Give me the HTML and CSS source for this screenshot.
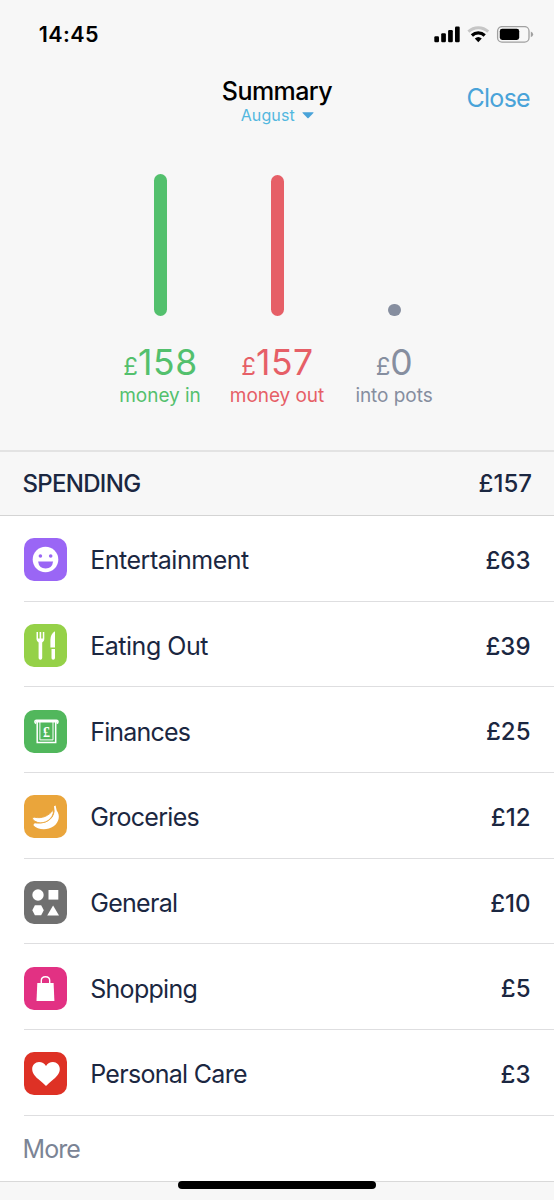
FILE: index.html
```html
<!DOCTYPE html>
<html lang="en">
<head>
<meta charset="utf-8">
<title>Summary</title>
<link rel="stylesheet" href="styles.css">
</head>
<body>
<div class="screen">
  <div class="status">
    <span class="time">14:45</span>
    <svg class="status-icons" viewBox="0 0 100 18" width="100" height="18">
      <rect x="0.3" y="10.3" width="4.7" height="5.9" rx="1.2"/>
      <rect x="7.2" y="7.2" width="4.7" height="9" rx="1.2"/>
      <rect x="14.1" y="4" width="4.7" height="12.2" rx="1.2"/>
      <rect x="21" y="0.5" width="4.7" height="15.7" rx="1.2"/>
      <g fill="none" stroke-width="2.9">
        <path d="M34.4 5.6A14.5 14.5 0 0 1 54.2 5.6" stroke="#c6c6c6"/>
        <path d="M37.9 9.4A9.6 9.6 0 0 1 50.7 9.4" stroke="#000" stroke-width="3.3"/>
      </g>
      <path d="M40.8 12.5Q44.3 9.5 47.8 12.5L44.3 16.2Z"/>
      <rect x="63.6" y="0.6" width="31.4" height="15.6" rx="4.4" fill="none" stroke="#a0a0a0" stroke-width="1.3"/>
      <rect x="65.8" y="2.8" width="19.4" height="11.2" rx="2.4"/>
      <path d="M96.8 5.6Q99.2 6.6 99.2 8.4T96.8 11.2Z" fill="#a0a0a0"/>
    </svg>
  </div>
  <header class="header">
    <div class="heading">
      <h1 class="title">Summary</h1>
      <div class="month"><span>August</span><svg width="12" height="7" viewBox="0 0 12 7"><path d="M.9.3H11.1Q12 .3 11.4 1L6.6 6Q6 6.6 5.4 6L.6 1Q0 .3.9.3Z" fill="#49a3d9"/></svg></div>
    </div>
    <span class="close">Close</span>
  </header>
  <section class="totals">
    <div class="total in"><div class="track"><i class="bar" style="height:142px"></i></div><div class="amount"><small>£</small>158</div><div class="label">money in</div></div>
    <div class="total out"><div class="track"><i class="bar" style="height:141px"></i></div><div class="amount"><small>£</small>157</div><div class="label">money out</div></div>
    <div class="total pots"><div class="track"><i class="bar" style="height:12.4px"></i></div><div class="amount"><small>£</small>0</div><div class="label">into pots</div></div>
  </section>
  <div class="spending"><span class="spending-name">SPENDING</span><span class="value">£157</span></div>
  <main class="list">
    <div class="row">
      <svg class="icon" viewBox="0 0 43 43"><rect width="43" height="43" rx="10" fill="#9a66f5"/><circle cx="21.5" cy="21.5" r="12.8" fill="#fff"/><g fill="#9a66f5"><circle cx="16.4" cy="18" r="1.8"/><circle cx="26.7" cy="18" r="1.8"/><path d="M14.1 23.5H29.1Q28.3 30.4 21.6 30.4T14.1 23.5Z"/></g></svg>
      <span class="name loose">Entertainment</span><span class="value">£63</span>
    </div>
    <div class="row">
      <svg class="icon" viewBox="0 0 43 43"><rect width="43" height="43" rx="10" fill="#95d148"/><g fill="#fff"><path d="M12.5 8H14V14.5H15.6V8H17.2V14.5H18.8V8H20.3V15.2Q20.3 17.2 18.2 18.5V34Q18.2 35.8 16.4 35.8T14.6 34V18.5Q12.5 17.2 12.5 15.2Z"/><path d="M31 7.2V23.6H26.4V16Q26.4 10 31 7.2Z"/><path d="M27.5 25H31V34Q31 35.8 29.2 35.8T27.5 34Z"/></g></svg>
      <span class="name loose">Eating Out</span><span class="value">£39</span>
    </div>
    <div class="row">
      <svg class="icon" viewBox="0 0 43 43"><rect width="43" height="43" rx="10" fill="#51b75c"/><g fill="none" stroke="#fff"><path d="M12.2 13.4Q10.9 13 10.9 11.7T12.5 10.3H32.5Q34 10.3 34 11.7T32.6 13.4" stroke-width="1.6"/><path d="M13.2 12V32.6H31.7V12" stroke-width="1.5"/><path d="M15.9 12V29.9H29V12" stroke-width="1"/><path d="M12 11.3H33" stroke-width="2.4"/></g><text class="pound" x="22.4" y="26.6">£</text></svg>
      <span class="name tight">Finances</span><span class="value">£25</span>
    </div>
    <div class="row">
      <svg class="icon" viewBox="0 0 43 43"><rect width="43" height="43" rx="10" fill="#eaa53b"/><path d="M30 11.2L31.6 10.6L32.7 15.5C36.4 20.3 35.2 27.2 29.6 31.3C23.2 35.8 13.4 34.8 9.6 30.5Q9.2 28.6 11 28.3C20.5 29.8 29.6 25 30.6 16.3Z" fill="#fff"/><path d="M29.6 15.5C29.4 24.5 20.5 29.2 13.8 27.5Q10 26.4 8.5 23.9Q8.4 21.9 10.2 22.2C18.6 24 24.6 20.6 28.8 15.6Z" fill="#fff" stroke="#eaa53b" stroke-width=".9"/></svg>
      <span class="name">Groceries</span><span class="value">£12</span>
    </div>
    <div class="row">
      <svg class="icon" viewBox="0 0 43 43"><rect width="43" height="43" rx="10" fill="#707070"/><g fill="#fff"><circle cx="14" cy="14" r="5.7"/><rect x="24.5" y="9" width="9.8" height="9.6"/><path d="M10.9 24.3H17.2L19.8 29.3L17.2 34.3H10.9L8.3 29.3Z"/><path d="M29.1 24.4L35 34.4H23.2Z"/></g></svg>
      <span class="name">General</span><span class="value">£10</span>
    </div>
    <div class="row">
      <svg class="icon" viewBox="0 0 43 43"><rect width="43" height="43" rx="10" fill="#e23183"/><path d="M13.3 16H29.6L30.4 33.9H12.5Z" fill="#fff"/><path d="M17.3 18V13.6Q17.3 9.7 21.5 9.7T25.7 13.6V18" fill="none" stroke="#fff" stroke-width="1.4"/></svg>
      <span class="name">Shopping</span><span class="value">£5</span>
    </div>
    <div class="row">
      <svg class="icon" viewBox="0 0 43 43"><rect width="43" height="43" rx="10" fill="#de3125"/><path d="M22 34Q19.5 31.5 14.5 27.3C10 23.5 8.2 20.5 8.2 17C8.2 12.8 11.4 9.9 15 9.9C18 9.9 20.5 11.4 22 14C23.5 11.4 26 9.9 29 9.9C32.6 9.9 35.8 12.8 35.8 17C35.8 20.5 34 23.5 29.5 27.3Q24.5 31.5 22 34Z" fill="#fff"/></svg>
      <span class="name">Personal Care</span><span class="value">£3</span>
    </div>
    <div class="more">More</div>
  </main>
  <footer class="footer"><div class="home"></div></footer>
</div>
</body>
</html>
```
FILE: styles.css
```css
* { box-sizing: border-box; }
body { margin: 0; }
.screen {
  width: 554px;
  height: 1200px;
  overflow: hidden;
  display: flex;
  flex-direction: column;
  background: #f7f7f7;
  color: #1b2741;
  font-family: Inter, "Liberation Sans", sans-serif;
  font-size: 25px;
}
.status {
  height: 70px;
  display: flex;
  justify-content: space-between;
  padding: 20px 20px 0 38.8px;
  color: #000;
}
.time { font-size: 21.5px; line-height: 28px; font-weight: 600; letter-spacing: .4px; }
.status-icons { margin-top: 5.5px; }
.header {
  height: 80px;
  display: grid;
  grid-template-columns: 120px 1fr 120px;
}
.heading { grid-column: 2; text-align: center; padding-top: 6px; }
.title {
  margin: 0;
  color: #000;
  font-size: 25px;
  line-height: 30px;
  font-weight: 500;
  letter-spacing: -.55px;
}
.month {
  display: flex;
  justify-content: center;
  align-items: center;
  gap: 7.5px;
  margin-top: -1px;
  padding-left: 1px;
  color: #53b7df;
  font-size: 16px;
  line-height: 20px;
  letter-spacing: .1px;
}
.close {
  color: #49a3d9;
  line-height: 30px;
  padding: 13px 24px 0 0;
  text-align: right;
  letter-spacing: -.7px;
}
.totals {
  height: 300px;
  display: grid;
  grid-template-columns: repeat(3, 117px);
  justify-content: center;
  text-align: center;
}
.in { color: #53c06d; }
.out { color: #e65f67; }
.pots { color: #868e9f; }
.track {
  height: 166.2px;
  display: flex;
  align-items: flex-end;
  justify-content: center;
  padding-left: .8px;
}
.bar { width: 12.4px; border-radius: 7px; background: currentColor; }
.amount { font-size: 35.5px; line-height: 42px; margin-top: 26.3px; height: 42px; letter-spacing: .6px; padding-left: 1px; }
.amount small { font-size: 24px; letter-spacing: 0; }
.label { font-size: 19px; line-height: 24px; white-space: nowrap; letter-spacing: -.05px; }
.spending {
  height: 66px;
  display: flex;
  align-items: center;
  justify-content: space-between;
  padding: 0 22px 0 22.5px;
  border-top: 2px solid #e3e3e3;
  border-bottom: 1px solid #d4d4d4;
}
.spending-name { font-size: 24px; font-weight: 500; letter-spacing: -.7px; }
.list { height: 664.5px; background: #fff; }
.row {
  height: 85.7px;
  margin-left: 23.5px;
  padding-right: 23.5px;
  display: flex;
  align-items: center;
  border-bottom: 1px solid #dedee0;
}
.icon { width: 43px; height: 43px; margin-right: 23.7px; margin-top: 3px; }
.name, .row .value { padding-top: 4px; }
.name { flex: 1; letter-spacing: -.7px; }
.loose { letter-spacing: -.47px; }
.tight { letter-spacing: -.82px; }
.value { font-size: 24px; font-weight: 500; }
.pound { font: 700 14px "Liberation Serif", serif; fill: #fff; text-anchor: middle; }
.more { color: #7b8495; padding: 18px 0 0 22.5px; line-height: 30px; letter-spacing: -.9px; }
.footer { flex: 1; border-top: 1px solid #d9d9d9; }
.home { width: 198px; height: 8px; margin: -1px auto 0; border-radius: 4px; background: #000; }
```
